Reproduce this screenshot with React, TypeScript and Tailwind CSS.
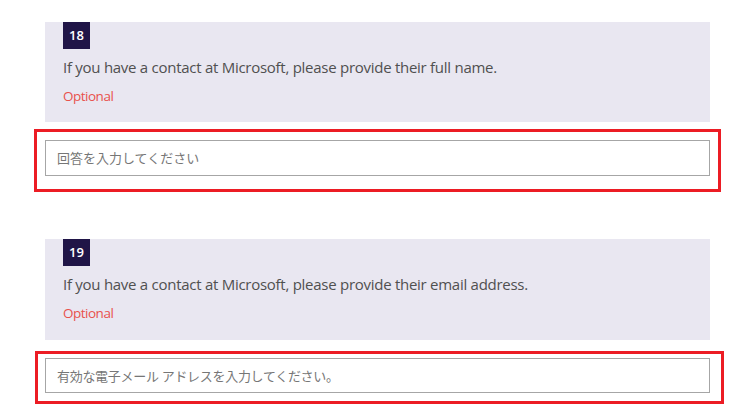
const FONT = "font-['Open_Sans','Noto_Sans_CJK_JP',sans-serif]";

type QuestionProps = {
  num: number;
  text: string;
  className?: string;
};

function QuestionPanel({ num, text, className = '' }: QuestionProps) {
  return (
    <div className={`bg-[#e9e7f1] pl-[18px] ${className}`}>
      <div className="w-[27px] h-[27px] bg-[#201547] text-white text-[13px] font-semibold flex items-center justify-center">
        {num}
      </div>
      <p className="mt-[8px] text-[15px] leading-[21px] tracking-[-0.27px] text-[#505050]">{text}</p>
      <p className="mt-[9px] text-[13.5px] leading-[19px] tracking-[-0.5px] text-[#e8514c]">Optional</p>
    </div>
  );
}

export default function App() {
  return (
    <div className={`${FONT} bg-white min-h-[410px] w-[755px] overflow-hidden`}>
      <div className="ml-[45px] w-[665px] pt-[22px]">
        <QuestionPanel num={18} text="If you have a contact at Microsoft, please provide their full name." className="h-[100px]" />

        <div className="mt-[7px] -ml-[11px] w-[687px] border-[3px] border-[#ec1c24] pl-[8px] pr-[8px] pt-[8px] pb-[13px]">
          <input
            type="text"
            placeholder="回答を入力してください"
            className="block w-full h-[36px] border border-[#a6a6a6] bg-white px-[11px] text-[13px] text-[#333] placeholder:text-[#767676] outline-none"
          />
        </div>

        <QuestionPanel num={19} text="If you have a contact at Microsoft, please provide their email address." className="mt-[47px] h-[101px]" />

        <div className="mt-[11px] -ml-[10px] w-[689px] border-[3px] border-[#ec1c24] pl-[7px] pr-[11px] pt-[4px] pb-[8px]">
          <input
            type="text"
            placeholder="有効な電子メール アドレスを入力してください。"
            className="block w-full h-[35px] border border-[#a6a6a6] bg-white px-[11px] text-[13px] tracking-[-0.3px] text-[#333] placeholder:text-[#767676] outline-none"
          />
        </div>
      </div>
    </div>
  );
}
